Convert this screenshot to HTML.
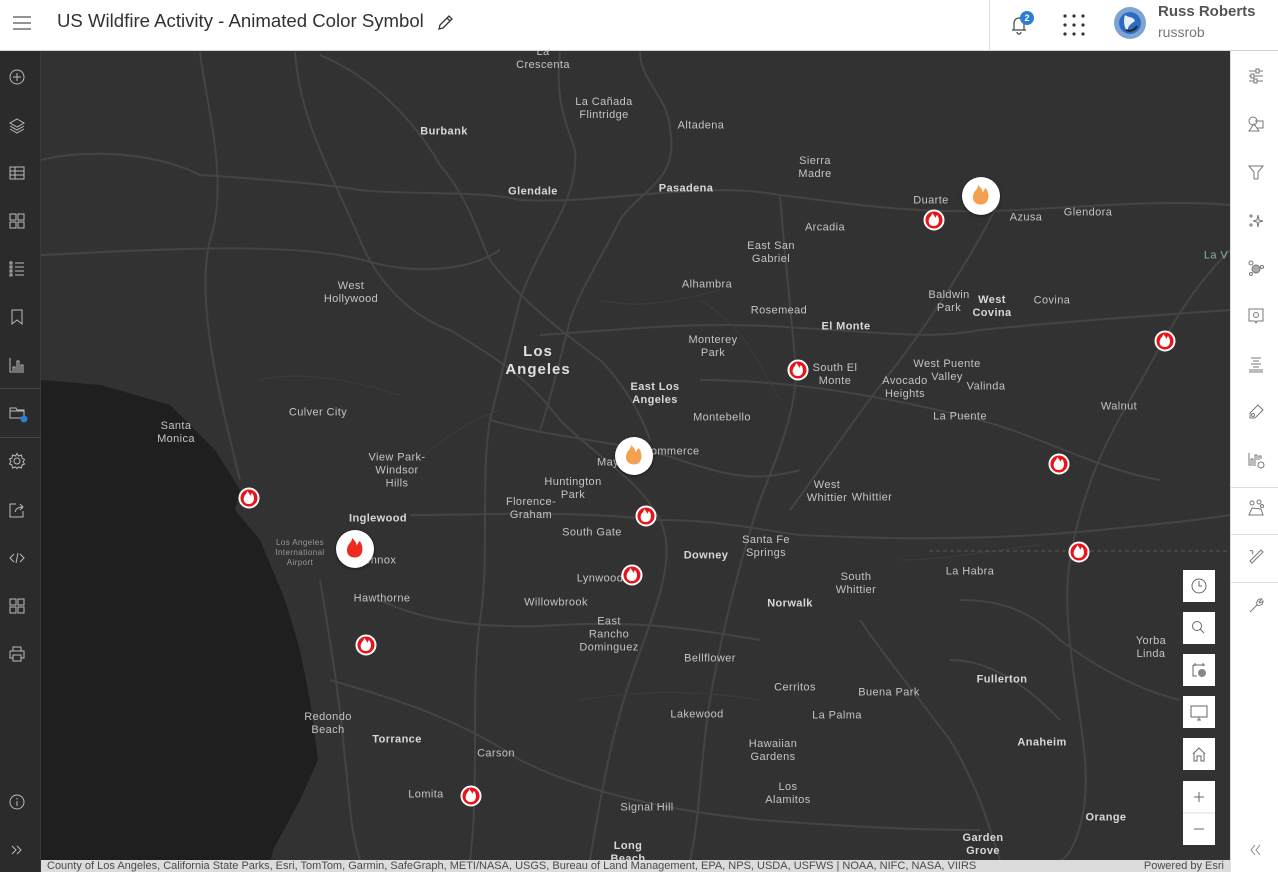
<!DOCTYPE html>
<html><head><meta charset="utf-8">
<style>
*{margin:0;padding:0;box-sizing:border-box}
body{width:1278px;height:872px;overflow:hidden;font-family:"Liberation Sans",sans-serif;background:#fff;position:relative}
#hdr{position:absolute;left:0;top:0;width:1278px;height:51px;background:#fff;border-bottom:1px solid #d4d4d4}
#title{position:absolute;left:57px;top:10px;font-size:18.6px;color:#323232}
#left{position:absolute;left:0;top:51px;width:41px;height:821px;background:#2b2b2b;border-right:1px solid #3a3a3a}
#right{position:absolute;left:1230px;top:51px;width:48px;height:821px;background:#fff;border-left:1px solid #ddd}
#map{position:absolute;left:41px;top:51px;width:1189px;height:809px;background:#323232;overflow:hidden}
.l{position:absolute;transform:translate(-50%,-50%);color:#c4c4c4;font-size:11px;text-align:center;line-height:13px;white-space:nowrap;letter-spacing:.4px}
.b{font-weight:bold;color:#d8d8d8}
.big{font-size:15px;line-height:18px;font-weight:bold;color:#e0e0e0;letter-spacing:1px}
.f{position:absolute;width:21px;height:21px;border-radius:50%;background:#e8141a;border:2px solid #fff;transform:translate(-50%,-50%)}
.F{position:absolute;width:38px;height:38px;border-radius:50%;background:#fff;transform:translate(-50%,-50%);box-shadow:0 1px 3px rgba(0,0,0,.5)}
.btn{position:absolute;left:1142px;width:32px;height:32px;background:#fff}
#attr{position:absolute;left:41px;top:860px;width:1189px;height:12px;background:#dcdcdc;font-size:11px;line-height:12px;color:#4a4a4a;padding-left:6px}
.ic{position:absolute;left:8px}
.ri{position:absolute;left:16px}
.sep{position:absolute;left:0;height:1px;background:#444;width:41px}
.rsep{position:absolute;left:0;height:1px;background:#ddd;width:48px}
</style></head><body>
<div id="hdr">
<svg style="position:absolute;left:12px;top:14px" width="20" height="18"><path d="M1 3H19M1 9H19M1 15H19" stroke="#555" stroke-width="1.3"/></svg>
<div id="title">US Wildfire Activity - Animated Color Symbol</div>
<svg style="position:absolute;left:437px;top:14px" width="17" height="17"><path d="M2 15L3 11L12 2L15 5L6 14Z M10 4L13 7" stroke="#333" stroke-width="1.3" fill="none"/></svg>
<div style="position:absolute;left:989px;top:0;width:1px;height:51px;background:#ddd"></div>
<svg style="position:absolute;left:1008px;top:13px" width="22" height="22"><path d="M4 17H18M6 17V10A5 5 0 0 1 16 10V17M9 19A2 2 0 0 0 13 19" stroke="#444" fill="none" stroke-width="1.2"/></svg>
<div style="position:absolute;left:1020px;top:11px;width:14px;height:14px;border-radius:50%;background:#2a7fd4;color:#fff;font-size:9px;font-weight:bold;text-align:center;line-height:14px">2</div>
<svg style="position:absolute;left:1062px;top:13px" width="24" height="24"><g fill="#333"><circle cx="3" cy="3" r="1.6"/><circle cx="12" cy="3" r="1.6"/><circle cx="21" cy="3" r="1.6"/><circle cx="3" cy="12" r="1.6"/><circle cx="12" cy="12" r="1.6"/><circle cx="21" cy="12" r="1.6"/><circle cx="3" cy="21" r="1.6"/><circle cx="12" cy="21" r="1.6"/><circle cx="21" cy="21" r="1.6"/></g></svg>
<svg style="position:absolute;left:1113px;top:6px" width="34" height="34"><circle cx="17" cy="17" r="16" fill="#7fa4d4"/><circle cx="17" cy="17" r="11" fill="#2b6cc0"/><path d="M12 9C16 12 20 10 22 15C18 18 14 20 15 26C11 22 10 15 12 9Z" fill="#e8eef6"/><path d="M13 24C17 26 22 24 24 20" stroke="#222" stroke-width="2" fill="none"/></svg>
<div style="position:absolute;left:1158px;top:3px;font-size:15px;font-weight:bold;color:#555">Russ Roberts</div>
<div style="position:absolute;left:1158px;top:24px;font-size:14px;color:#777">russrob</div>
</div>

<div id="left">
<svg class="ic" style="top:17px" width="18" height="18"><circle cx="9" cy="9" r="7" stroke="#bbb" fill="none"/><path d="M9 5V13M5 9H13" stroke="#bbb"/></svg>
<svg class="ic" style="top:65px" width="18" height="18"><path d="M9 3L16 7L9 11L2 7Z M2 10L9 14L16 10 M2 13L9 17L16 13" stroke="#bbb" fill="none"/></svg>
<svg class="ic" style="top:113px" width="18" height="18"><path d="M2 3H16V15H2Z M2 7H16M2 11H16M7 3V15" stroke="#bbb" fill="none"/></svg>
<svg class="ic" style="top:161px" width="18" height="18"><path d="M2 2H8V8H2Z M10 2H16V8H10Z M2 10H8V16H2Z M10 10H16V16H10Z" stroke="#bbb" fill="none"/></svg>
<svg class="ic" style="top:209px" width="18" height="18"><path d="M7 3H16M7 7H16M7 11H16M7 15H16" stroke="#bbb"/><path d="M2 2H4V4H2ZM2 6H4V8H2ZM2 10H4V12H2ZM2 14H4V16H2Z" stroke="#bbb" fill="none"/></svg>
<svg class="ic" style="top:257px" width="18" height="18"><path d="M4 2H14V16L9 12L4 16Z" stroke="#bbb" fill="none"/></svg>
<svg class="ic" style="top:305px" width="18" height="18"><path d="M2 2V16H16 M5 15V11H7V15 M9 15V5H11V15 M13 15V9H15V15" stroke="#bbb" fill="none"/></svg>
<div class="sep" style="top:337px"></div>
<svg class="ic" style="top:353px" width="20" height="20"><path d="M2 4H8L9 6H16V14H2Z M2 7H16" stroke="#bbb" fill="none"/><circle cx="16" cy="15" r="3.5" fill="#2a7fd4"/></svg>
<svg class="ic" style="top:401px" width="18" height="18"><circle cx="9" cy="9" r="3" stroke="#bbb" fill="none"/><path d="M9 1.5L10.5 4L13.5 3L14 6L16.5 7.5L15 10L16.5 12L14 13L13.5 16L10.5 15L9 16.5L7.5 15L4.5 16L4 13L1.5 12L3 9.5L1.5 7L4 6L4.5 3L7.5 4Z" stroke="#bbb" fill="none"/></svg>
<div class="sep" style="top:386px"></div>
<svg class="ic" style="top:450px" width="18" height="18"><path d="M8 3H2V16H15V10 M7 11C8 7 11 6 15 6 M12 3L15 6L12 9" stroke="#bbb" fill="none"/></svg>
<svg class="ic" style="top:498px" width="18" height="18"><path d="M6 5L2 9L6 13 M12 5L16 9L12 13 M10 4L8 14" stroke="#bbb" fill="none"/></svg>
<svg class="ic" style="top:546px" width="18" height="18"><path d="M2 2H8V8H2Z M10 2H16V8H10Z M2 10H8V16H2Z M10 10H16V16H10Z" stroke="#bbb" fill="none"/></svg>
<svg class="ic" style="top:594px" width="18" height="18"><path d="M5 6V2H13V6 M2 6H16V13H13 M5 13H2V6 M5 10H13V16H5Z" stroke="#bbb" fill="none"/></svg>
<svg class="ic" style="top:742px" width="18" height="18"><circle cx="9" cy="9" r="7" stroke="#bbb" fill="none"/><path d="M9 8V13M9 5V6.5" stroke="#bbb"/></svg>
<svg class="ic" style="top:790px" width="18" height="18"><path d="M4 5L8 9L4 13 M9 5L13 9L9 13" stroke="#bbb" fill="none"/></svg>
</div>

<div id="map">
<svg width="1189" height="809" style="position:absolute;left:0;top:0">
<g transform="translate(-41,-51)" fill="none" stroke="#444" stroke-width="2">
<path d="M41 160C80 150 150 150 200 175C280 180 330 185 360 190C400 195 480 190 520 200C600 205 700 180 780 195C860 205 920 215 1020 210C1100 205 1180 200 1230 205"/>
<path d="M41 255C150 250 300 240 370 262C420 275 470 270 500 250"/>
<path d="M200 52C205 100 230 180 210 240C195 300 220 400 240 480"/>
<path d="M295 52C300 120 330 170 360 240C380 290 420 320 450 330C500 360 530 380 560 420C600 460 640 480 660 520C680 560 650 620 630 680C610 740 600 800 590 860"/>
<path d="M320 55C380 80 420 130 440 165C470 200 480 240 490 260C520 300 560 330 600 360C620 380 640 410 650 440"/>
<path d="M560 52C555 100 565 120 575 150C580 200 540 240 520 300C510 340 500 380 490 420C480 480 490 560 480 620C470 700 480 780 470 860"/>
<path d="M640 52C640 80 670 100 670 130C680 180 640 190 620 220C600 260 580 290 570 320C560 360 550 400 540 430"/>
<path d="M410 515C500 515 560 510 660 520C720 520 760 530 800 535C900 540 1000 540 1100 530C1150 525 1200 520 1230 515"/>
<path d="M540 335C620 330 700 320 800 328C880 332 930 340 980 330C1080 320 1160 315 1230 310"/>
<path d="M780 195C785 260 790 300 795 360C800 400 780 450 760 500C740 560 720 640 710 700C700 760 700 820 690 860"/>
<path d="M1000 200C970 260 930 320 900 360C860 410 820 470 790 510"/>
<path d="M1230 250C1180 300 1160 350 1130 400C1100 450 1080 500 1070 560C1060 620 1080 700 1085 760C1090 820 1070 860 1060 860"/>
<path d="M700 380C800 380 900 400 980 420C1050 440 1100 470 1160 480"/>
<path d="M320 580C330 640 340 700 345 760C350 800 350 830 360 860"/>
<path d="M380 600C420 620 480 630 560 625C640 620 700 630 760 640"/>
<path d="M330 680C400 700 460 720 520 760C580 790 660 810 760 820C830 825 900 830 980 830"/>
<path d="M960 600C1000 600 1030 610 1060 640C1100 670 1140 690 1180 700"/>
<path d="M860 620C880 650 920 700 950 740C980 790 990 830 1000 860"/>
<path d="M950 660C1000 660 1040 700 1060 720"/>
<path d="M490 420C560 440 620 440 680 460C740 480 760 480 800 470"/>
</g>
<g transform="translate(-41,-51)" fill="none" stroke="#3b3b3b" stroke-width="1.2">
<path d="M420 460C440 440 470 420 500 410M700 300C750 330 760 370 780 400M600 300C640 310 680 300 720 290M900 560C950 560 990 550 1040 545M580 700C640 690 700 690 760 700M260 380C300 370 350 380 400 395"/>
</g>
<path d="M0 329L60 334L129 354L174 399L199 439L194 459L219 489L244 549L259 599L269 649L277 709L259 749L232 799L230 809L0 809Z" fill="#1f1f1f"/>
<path d="M888 500H1189" stroke="#555" stroke-dasharray="4 3" fill="none"/>
</svg>

<div class="l" style="left:502px;top:8px">La<br>Crescenta</div>
<div class="l" style="left:563px;top:58px">La Cañada<br>Flintridge</div>
<div class="l b" style="left:403px;top:81px">Burbank</div>
<div class="l" style="left:660px;top:75px">Altadena</div>
<div class="l" style="left:774px;top:117px">Sierra<br>Madre</div>
<div class="l b" style="left:492px;top:141px">Glendale</div>
<div class="l b" style="left:645px;top:138px">Pasadena</div>
<div class="l" style="left:890px;top:150px">Duarte</div>
<div class="l" style="left:985px;top:167px">Azusa</div>
<div class="l" style="left:1047px;top:162px">Glendora</div>
<div class="l" style="left:784px;top:177px">Arcadia</div>
<div class="l" style="left:730px;top:202px">East San<br>Gabriel</div>
<div class="l" style="left:1175px;top:205px;color:#7fb7a0">La V</div>
<div class="l" style="left:310px;top:242px">West<br>Hollywood</div>
<div class="l" style="left:666px;top:234px">Alhambra</div>
<div class="l" style="left:908px;top:251px">Baldwin<br>Park</div>
<div class="l b" style="left:951px;top:256px">West<br>Covina</div>
<div class="l" style="left:1011px;top:250px">Covina</div>
<div class="l" style="left:738px;top:260px">Rosemead</div>
<div class="l b" style="left:805px;top:276px">El Monte</div>
<div class="l" style="left:672px;top:296px">Monterey<br>Park</div>
<div class="l big" style="left:497px;top:310px">Los<br>Angeles</div>
<div class="l" style="left:794px;top:324px">South El<br>Monte</div>
<div class="l" style="left:906px;top:320px">West Puente<br>Valley</div>
<div class="l" style="left:864px;top:337px">Avocado<br>Heights</div>
<div class="l" style="left:945px;top:336px">Valinda</div>
<div class="l b" style="left:614px;top:343px">East Los<br>Angeles</div>
<div class="l" style="left:1078px;top:356px">Walnut</div>
<div class="l" style="left:277px;top:362px">Culver City</div>
<div class="l" style="left:681px;top:367px">Montebello</div>
<div class="l" style="left:919px;top:366px">La Puente</div>
<div class="l" style="left:135px;top:382px">Santa<br>Monica</div>
<div class="l" style="left:356px;top:420px">View Park-<br>Windsor<br>Hills</div>
<div class="l" style="left:581px;top:412px">Maywood</div>
<div class="l" style="left:630px;top:401px">Commerce</div>
<div class="l" style="left:532px;top:438px">Huntington<br>Park</div>
<div class="l" style="left:786px;top:441px">West<br>Whittier</div>
<div class="l" style="left:831px;top:447px">Whittier</div>
<div class="l" style="left:490px;top:458px">Florence-<br>Graham</div>
<div class="l b" style="left:337px;top:468px">Inglewood</div>
<div class="l" style="left:259px;top:502px;font-size:8px;line-height:10px;color:#999">Los Angeles<br>International<br>Airport</div>
<div class="l" style="left:336px;top:510px">Lennox</div>
<div class="l" style="left:551px;top:482px">South Gate</div>
<div class="l b" style="left:665px;top:505px">Downey</div>
<div class="l" style="left:725px;top:496px">Santa Fe<br>Springs</div>
<div class="l" style="left:929px;top:521px">La Habra</div>
<div class="l" style="left:559px;top:528px">Lynwood</div>
<div class="l" style="left:815px;top:533px">South<br>Whittier</div>
<div class="l" style="left:341px;top:548px">Hawthorne</div>
<div class="l" style="left:515px;top:552px">Willowbrook</div>
<div class="l b" style="left:749px;top:553px">Norwalk</div>
<div class="l" style="left:568px;top:584px">East<br>Rancho<br>Dominguez</div>
<div class="l" style="left:1110px;top:597px">Yorba<br>Linda</div>
<div class="l" style="left:669px;top:608px">Bellflower</div>
<div class="l b" style="left:961px;top:629px">Fullerton</div>
<div class="l" style="left:754px;top:637px">Cerritos</div>
<div class="l" style="left:848px;top:642px">Buena Park</div>
<div class="l" style="left:287px;top:673px">Redondo<br>Beach</div>
<div class="l" style="left:656px;top:664px">Lakewood</div>
<div class="l" style="left:796px;top:665px">La Palma</div>
<div class="l b" style="left:356px;top:689px">Torrance</div>
<div class="l" style="left:455px;top:703px">Carson</div>
<div class="l b" style="left:1001px;top:692px">Anaheim</div>
<div class="l" style="left:732px;top:700px">Hawaiian<br>Gardens</div>
<div class="l" style="left:747px;top:743px">Los<br>Alamitos</div>
<div class="l" style="left:385px;top:744px">Lomita</div>
<div class="l" style="left:606px;top:757px">Signal Hill</div>
<div class="l b" style="left:1065px;top:767px">Orange</div>
<div class="l b" style="left:942px;top:794px">Garden<br>Grove</div>
<div class="l b" style="left:587px;top:802px">Long<br>Beach</div>

<div class="f" style="left:893px;top:169px"></div>
<div class="f" style="left:1124px;top:290px"></div>
<div class="f" style="left:757px;top:319px"></div>
<div class="f" style="left:1018px;top:413px"></div>
<div class="f" style="left:208px;top:447px"></div>
<div class="f" style="left:605px;top:465px"></div>
<div class="f" style="left:1038px;top:501px"></div>
<div class="f" style="left:591px;top:524px"></div>
<div class="f" style="left:325px;top:594px"></div>
<div class="f" style="left:430px;top:745px"></div>
<div class="F" style="left:940px;top:145px"></div>
<div class="F" style="left:593px;top:405px"></div>
<div class="F" style="left:314px;top:498px"></div>
<svg width="1189" height="809" style="position:absolute;left:0;top:0" >
<defs><path id="fl" d="M0 7C-5 7 -6 3 -5 0C-4 -3 -2 -3 -2 -6C0 -4 1 -3 1 -1C2 -2 2 -3 3 -4C6 -1 6 7 0 7Z"/></defs>
<g fill="#fff">
<use href="#fl" x="893" y="168"/><use href="#fl" x="1124" y="289"/><use href="#fl" x="757" y="318"/><use href="#fl" x="1018" y="412"/><use href="#fl" x="208" y="446"/><use href="#fl" x="605" y="464"/><use href="#fl" x="1038" y="500"/><use href="#fl" x="591" y="523"/><use href="#fl" x="325" y="593"/><use href="#fl" x="430" y="744"/>
</g>
<use href="#fl" transform="translate(940,143) scale(1.5)" fill="#f4a050"/>
<use href="#fl" transform="translate(593,403) scale(1.5)" fill="#f4a050"/>
<use href="#fl" transform="translate(314,496) scale(1.5)" fill="#ec2a1e"/>
</svg>

<div class="btn" style="top:519px"><svg width="32" height="32"><circle cx="16" cy="16" r="7" stroke="#666" fill="none"/><path d="M16 11V16H19" stroke="#666" fill="none"/></svg></div>
<div class="btn" style="top:561px"><svg width="32" height="32"><circle cx="14" cy="14" r="4.5" stroke="#666" fill="none"/><path d="M17 17L21 21" stroke="#666"/></svg></div>
<div class="btn" style="top:603px"><svg width="32" height="32"><path d="M10 11H22M10 11V22H14M12 9V12M20 9V12" stroke="#666" fill="none"/><circle cx="19" cy="19" r="4" fill="#888"/></svg></div>
<div class="btn" style="top:645px"><svg width="32" height="32"><path d="M8 10H24V21H8Z M14 24H18M16 21V24" stroke="#666" fill="none"/></svg></div>
<div class="btn" style="top:687px"><svg width="32" height="32"><path d="M10 16L16 10L22 16 M11 15V23H14V18H18V23H21V15" stroke="#666" fill="none"/></svg></div>
<div class="btn" style="top:730px;height:64px"><svg width="32" height="64"><path d="M16 11V21M11 16H21" stroke="#666"/><path d="M0 32H32" stroke="#ddd"/><path d="M11 48H21" stroke="#666"/></svg></div>
</div>

<div id="right">
<svg class="ri" style="top:16px" width="18" height="18"><path d="M2 4H16M2 9H16M2 14H16" stroke="#777"/><rect x="9" y="2" width="3" height="4" fill="#fff" stroke="#777"/><rect x="4" y="7" width="3" height="4" fill="#fff" stroke="#777"/><rect x="7" y="12" width="3" height="4" fill="#fff" stroke="#777"/></svg>
<svg class="ri" style="top:64px" width="18" height="18"><circle cx="6" cy="6" r="4" stroke="#777" fill="none"/><path d="M8 6H16V13H10 M2 16L7 9L12 16Z" stroke="#777" fill="none"/></svg>
<svg class="ri" style="top:112px" width="18" height="18"><path d="M2 3H16L11 9V16H7V9Z" stroke="#777" fill="none"/></svg>
<svg class="ri" style="top:160px" width="18" height="18"><path d="M11 4L12 9L16 10L12 11L11 16L10 11L6 10L10 9Z M4 3V7M2 5H6M4 12V16M2 14H6" stroke="#777" fill="none"/></svg>
<svg class="ri" style="top:208px" width="18" height="18"><circle cx="9" cy="10" r="4" fill="#aaa" stroke="#777"/><circle cx="4" cy="4" r="2" stroke="#777" fill="none"/><circle cx="15" cy="8" r="1.5" stroke="#777" fill="none"/><circle cx="4" cy="15" r="1.5" stroke="#777" fill="none"/></svg>
<svg class="ri" style="top:256px" width="18" height="18"><path d="M2 2H16V14H10L9 16L8 14H2Z" stroke="#777" fill="none"/><circle cx="9" cy="8" r="2.5" stroke="#777" fill="none"/></svg>
<svg class="ri" style="top:304px" width="18" height="18"><path d="M4 3H14M6 6H12M4 9H14M6 12H12M2 15H16M2 17H16" stroke="#777"/></svg>
<svg class="ri" style="top:352px" width="18" height="18"><path d="M3 15L3 10L11 2L16 7L8 15Z" stroke="#777" fill="none"/><circle cx="6" cy="12" r="1.5" stroke="#777" fill="none"/></svg>
<svg class="ri" style="top:400px" width="18" height="18"><path d="M2 2V14H9M4 13V8H6V13M8 13V4H10V9M12 9V5H14V8" stroke="#777" fill="none"/><circle cx="14" cy="14" r="3" stroke="#777" fill="none"/></svg>
<div class="rsep" style="top:436px"></div>
<svg class="ri" style="top:448px" width="18" height="18"><circle cx="5" cy="4" r="2" stroke="#777" fill="none"/><circle cx="12" cy="3" r="2" stroke="#777" fill="none"/><circle cx="15" cy="7" r="1.5" stroke="#777" fill="none"/><path d="M2 16L5 9L14 10L16 16Z" stroke="#777" fill="none"/></svg>
<div class="rsep" style="top:483px"></div>
<svg class="ri" style="top:496px" width="18" height="18"><path d="M5 16L16 5L14 3L3 14Z M3 4C5 2 7 5 5 7" stroke="#777" fill="none"/></svg>
<div class="rsep" style="top:531px"></div>
<svg class="ri" style="top:545px" width="18" height="18"><path d="M3 16L10 9C9 6 11 2 15 3L12 6L13 7L16 5C16 9 13 10 10 9" stroke="#777" fill="none"/></svg>
<svg class="ri" style="top:791px" width="16" height="16"><path d="M8 3L4 8L8 13 M13 3L9 8L13 13" stroke="#888" fill="none"/></svg>
</div>

<div id="attr">County of Los Angeles, California State Parks, Esri, TomTom, Garmin, SafeGraph, METI/NASA, USGS, Bureau of Land Management, EPA, NPS, USDA, USFWS | NOAA, NIFC, NASA, VIIRS<span style="position:absolute;right:6px;top:0">Powered by Esri</span></div>
</body></html>
